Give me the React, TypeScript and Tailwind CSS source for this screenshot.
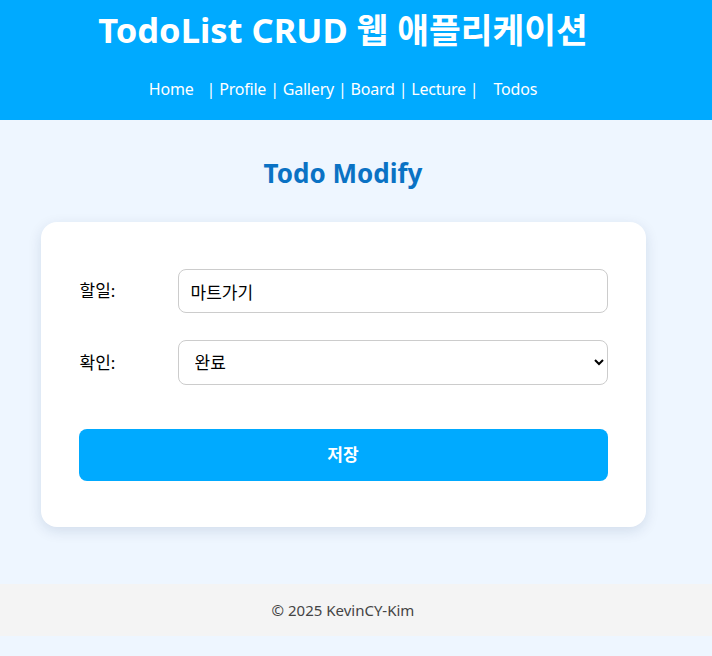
export default function App() {
  const font = { fontFamily: '"Noto Sans", "Noto Sans CJK KR", sans-serif' };
  return (
    <div className="min-h-[656px] bg-[#eef6ff] font-['Noto_Sans','Noto_Sans_CJK_KR',sans-serif]" style={font}>
      <header className="bg-[#00aaff] h-[120px] text-white">
        <div className="w-[686px] flex flex-col items-center">
          <h1 className="mt-[9px] text-[34.5px] font-bold leading-[42px]">TodoList CRUD 웹 애플리케이션</h1>
          <nav className="mt-[26px] text-[16px] leading-[24px] tracking-[-0.2px]">
            <span className="mr-[13px]">Home</span>
            <span>| Profile | Gallery | Board | Lecture |</span>
            <span className="ml-[15px]">Todos</span>
          </nav>
        </div>
      </header>

      <main className="w-[686px] flex flex-col items-center pt-[37px] pb-[57px]">
        <h2 className="text-[26px] font-bold text-[#0a72c4] leading-[32px]">Todo Modify</h2>
        <div className="mt-[33px] w-[605px] bg-white rounded-2xl shadow-[0_4px_14px_rgba(0,40,90,0.12)] px-[38px] pt-[47px] pb-[46px]">
          <div className="flex items-center">
            <label className="w-[99px] text-[17px] text-black pl-px">할일:</label>
            <input
              className="flex-1 h-[44px] border border-[#cccccc] rounded-lg px-3 text-[17px] text-black outline-none"
              defaultValue="마트가기"
            />
          </div>
          <div className="flex items-center mt-[27px]">
            <label className="w-[99px] text-[17px] text-black pl-px">확인:</label>
            <select
              className="flex-1 h-[45px] border border-[#cccccc] rounded-lg px-3 text-[17px] text-black bg-white outline-none"
              defaultValue="done"
            >
              <option value="todo">미완료</option>
              <option value="done">완료</option>
            </select>
          </div>
          <button className="mt-[44px] w-full h-[52px] rounded-lg bg-[#00aaff] text-white text-[17px] font-bold">
            저장
          </button>
        </div>
      </main>

      <footer className="bg-[#f4f4f4] h-[52px] flex items-center">
        <div className="w-[686px] text-center text-[15px] text-[#444444]">© 2025 KevinCY-Kim</div>
      </footer>
    </div>
  );
}
